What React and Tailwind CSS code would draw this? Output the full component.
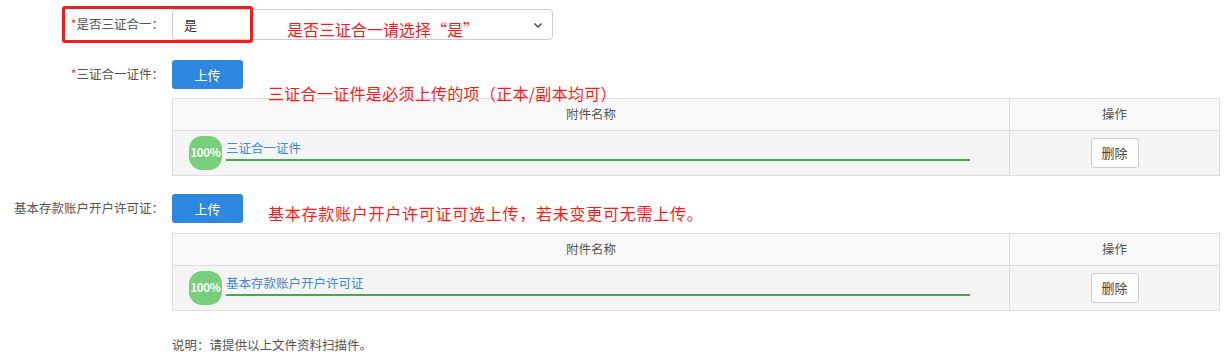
import React from "react";

const font = { fontFamily: '"Noto Sans CJK SC", "Noto Sans", sans-serif' };

function Label({ required, children }) {
  return (
    <div className="w-[172px] shrink-0 pr-[8px] text-right text-[12.5px] text-[#555]">
      {required && <span className="text-[#e4393c]">*</span>}
      {children}：
    </div>
  );
}

function UploadButton() {
  return (
    <button className="h-[29px] w-[71px] rounded-[3px] bg-[#2d86e0] text-[13px] text-white">
      上传
    </button>
  );
}

function FileTable({ name }) {
  return (
    <div className="ml-[172px] w-[1048px] border border-[#ddd] text-[12.5px]">
      <div className="flex h-[31px] items-center bg-[#f8f8f8] text-[#555]">
        <div className="flex h-full w-[837px] items-center justify-center border-r border-[#ddd]">
          附件名称
        </div>
        <div className="flex h-full flex-1 items-center justify-center">操作</div>
      </div>
      <div className="flex h-[45px] border-t border-[#ddd] bg-[#f5f5f5]">
        <div className="flex w-[837px] items-center border-r border-[#ddd] pl-[16px]">
          <div className="flex h-[34px] w-[33px] items-center justify-center rounded-[13px] bg-[#77cf7b] text-[11.5px] font-semibold tracking-[-0.3px] text-white">
            100%
          </div>
          <div className="ml-[4px] flex w-[744px] flex-col pb-[6px]">
            <span className="leading-[16px] text-[#3b8ad4]">{name}</span>
            <div className="mt-[3px] h-[2px] w-full bg-[#4aa84f]"></div>
          </div>
        </div>
        <div className="flex flex-1 items-center justify-center">
          <button className="h-[30px] w-[48px] rounded-[3px] border border-[#ccc] bg-white text-[13px] text-[#444]">
            删除
          </button>
        </div>
      </div>
    </div>
  );
}

export default function App() {
  return (
    <div className="relative h-[359px] w-[1229px] bg-white" style={font}>
      <div className="flex flex-col pt-[9px]">
        <div className="flex items-center">
          <Label required>是否三证合一</Label>
          <div className="flex h-[31px] w-[381px] items-center justify-between rounded-[4px] border border-[#ccc] pl-[11px] pr-[8px] text-[13px] text-[#333]">
            <span>是</span>
            <svg width="12" height="12" viewBox="0 0 12 12" fill="none">
              <path d="M2.5 4.5 L6 8 L9.5 4.5" stroke="#444" strokeWidth="1.5" />
            </svg>
          </div>
        </div>

        <div className="mt-[20px] flex items-center">
          <Label required>三证合一证件</Label>
          <UploadButton />
        </div>
        <div className="mt-[9px]">
          <FileTable name="三证合一证件" />
        </div>

        <div className="mt-[18px] flex items-center">
          <Label>基本存款账户开户许可证</Label>
          <UploadButton />
        </div>
        <div className="mt-[10px]">
          <FileTable name="基本存款账户开户许可证" />
        </div>

        <div className="ml-[172px] mt-[25px] text-[12.5px] text-[#555]">
          说明：请提供以上文件资料扫描件。
        </div>
      </div>

      {/* annotations drawn over the form */}
      <div className="absolute left-[62px] top-[6px] h-[37px] w-[191px] rounded-[3px] border-[3px] border-[#f41c1c]"></div>
      <div className="absolute left-[287px] top-[21px] text-[16px] leading-[16px] text-[#ff1a1a]">
        是否三证合一请选择“是”
      </div>
      <div className="absolute left-[268px] top-[85px] text-[16px] leading-[16px] tracking-[0.3px] text-[#ff1a1a]">
        三证合一证件是必须上传的项（正本/副本均可）
      </div>
      <div className="absolute left-[268px] top-[205px] text-[16px] leading-[16px] tracking-[0.75px] text-[#ff1a1a]">
        基本存款账户开户许可证可选上传，若未变更可无需上传。
      </div>
    </div>
  );
}
